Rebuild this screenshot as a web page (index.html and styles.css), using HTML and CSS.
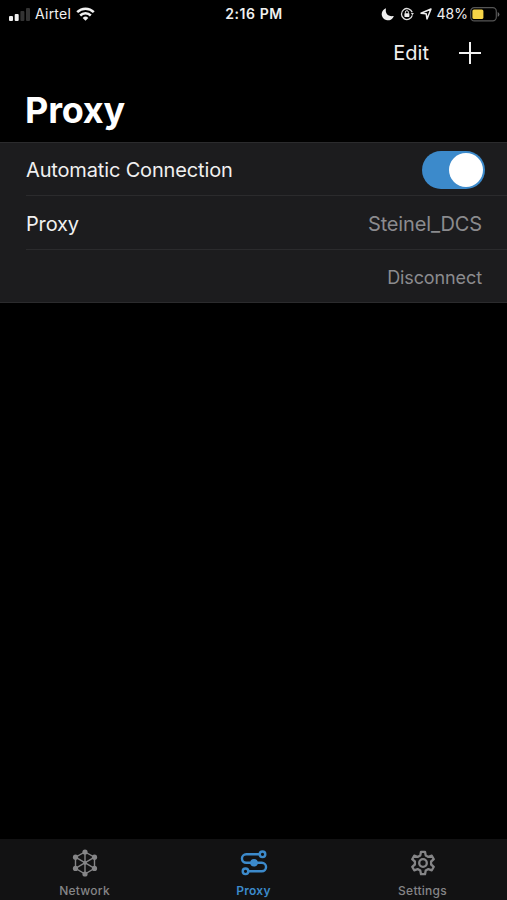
FILE: index.html
```
<!DOCTYPE html>
<html lang="en">
<head>
<meta charset="utf-8">
<title>Proxy</title>
<link rel="stylesheet" href="styles.css">
</head>
<body>
<div class="screen">
  <header class="status">
    <div class="status-left">
      <svg class="signal" width="21" height="13" viewBox="0 0 21 13"><rect y="8" width="4" height="5" rx="1" fill="#eee"/><rect x="5.7" y="6" width="4" height="7" rx="1" fill="#eee"/><rect x="11.4" y="3" width="4" height="10" rx="1" fill="#333"/><rect x="17" width="4" height="13" rx="1" fill="#333"/></svg>
      <span class="carrier">Airtel</span>
      <svg class="wifi" width="19" height="14" viewBox="0 0 19 14" fill="none" stroke="#f2f2f2" stroke-width="2.5"><path d="M1.2 5.2a11.7 11.7 0 0 1 16.6 0M4.2 8.5a7.5 7.5 0 0 1 10.6 0"/><path d="M6.7 10.9a4 4 0 0 1 5.6 0L9.5 13.8z" fill="#f2f2f2" stroke="none"/></svg>
    </div>
    <time class="clock">2:16 PM</time>
    <div class="status-right">
      <svg width="12" height="12" viewBox="0 0 12 12" fill="#eee"><path d="M4 .2C2.8 5.4 6.2 9 11.8 8A6.2 6.2 0 1 1 4 .2z"/></svg>
      <svg class="lock" width="14" height="14" viewBox="0 0 14 14"><path d="M12.3 8.4A5.5 5.5 0 1 1 12.2 5.3" fill="none" stroke="#ddd" stroke-width="1.3"/><path d="M10.8 6.1h3.1l-1.5 2.2z" fill="#ddd"/><rect x="4.4" y="6.2" width="5" height="3.7" rx=".6" fill="#eee"/><path d="M5.4 6.6V5.2a1.5 1.5 0 0 1 3 0v1.4" fill="none" stroke="#eee"/></svg>
      <svg class="arrow" width="12" height="12" viewBox="0 0 12 12"><path d="M1 5.2L11 1 7 11 6.2 5.8z" fill="none" stroke="#eee" stroke-width="1.5" stroke-linejoin="round"/></svg>
      <span class="percent">48%</span>
      <svg class="battery" width="30" height="15" viewBox="0 0 30 15"><rect x=".7" y=".7" width="25.6" height="13.2" rx="3.6" fill="none" stroke="#555" stroke-width="1.2"/><rect x="2.4" y="2.5" width="11" height="9.6" rx="1.6" fill="#f7d447"/><path d="M27.7 5q1.7.8 1.7 2.4t-1.7 2.4z" fill="#666"/></svg>
    </div>
  </header>
  <nav class="toolbar">
    <span class="edit">Edit</span>
    <svg width="22" height="22" viewBox="0 0 22 22" stroke="#f2f2f2" stroke-width="2"><path d="M0 11h22M11 0v22"/></svg>
  </nav>
  <h1 class="title">Proxy</h1>
  <main class="list">
    <div class="row">
      <span class="label">Automatic Connection</span>
      <span class="switch"><span class="knob"></span></span>
    </div>
    <div class="row">
      <span class="label">Proxy</span>
      <span class="value">Steinel_DCS</span>
    </div>
    <div class="row">
      <span class="action">Disconnect</span>
    </div>
  </main>
  <footer class="tabs">
    <div class="tab">
      <svg width="26" height="28" viewBox="0 0 26 28" stroke="#858587" fill="#858587"><path d="M13 3L22.5 8.2V19.4L13 25 3.5 19.4V8.2zM13 3V25M3.5 8.2L22.5 19.4M22.5 8.2L3.5 19.4" fill="none" stroke-width="1.4"/><g stroke="none"><circle cx="13" cy="3" r="2.6"/><circle cx="22.5" cy="8.2" r="2.6"/><circle cx="22.5" cy="19.4" r="2.6"/><circle cx="13" cy="25" r="2.6"/><circle cx="3.5" cy="19.4" r="2.6"/><circle cx="3.5" cy="8.2" r="2.6"/><circle cx="13" cy="13.8" r="1.9"/></g></svg>
      <span class="tab-name">Network</span>
    </div>
    <div class="tab active">
      <svg width="26" height="28" viewBox="0 0 26 28" fill="none" stroke="#3c8acb" stroke-width="2.4"><path d="M18.5 5.3H5.2a4.25 4.25 0 0 0 0 8.5H20.8a4.25 4.25 0 0 1 0 8.5H7.5"/><circle cx="21.5" cy="5.3" r="2.8"/><circle cx="4.5" cy="22.3" r="2.8"/><circle cx="13" cy="13.8" r="3.8" fill="#3c8acb" stroke="none"/></svg>
      <span class="tab-name">Proxy</span>
    </div>
    <div class="tab">
      <svg width="26" height="28" viewBox="0 0 26 28" fill="none" stroke="#858587" stroke-width="2.3" stroke-linejoin="round"><path d="M11 2.8h4l.7 3.6 2.7 1.5 3.4-1.2 2 3.5-2.7 2.3v3l2.7 2.3-2 3.5-3.4-1.2-2.7 1.5-.7 3.6h-4l-.7-3.6-2.7-1.5-3.4 1.2-2-3.5 2.7-2.3v-3l-2.7-2.3 2-3.5 3.4 1.2 2.7-1.5z"/><circle cx="13" cy="14" r="3.8"/></svg>
      <span class="tab-name">Settings</span>
    </div>
  </footer>
</div>
</body>
</html>
```
FILE: styles.css
```
* { box-sizing: border-box; }
body { margin: 0; background: #000; color: #f0f0f0; font-family: Inter, "Liberation Sans", sans-serif; }
svg { display: block; flex: none; overflow: visible; }
.screen { height: 900px; display: flex; flex-direction: column; overflow: hidden; }
.status { height: 28px; padding: 0 7px 0 9px; display: grid; grid-template-columns: 1fr auto 1fr; align-items: center; font-size: 14px; line-height: 28px; }
.status-left, .status-right { display: flex; align-items: center; height: 27px; }
.status-right { justify-content: flex-end; }
.carrier { margin-left: 5px; letter-spacing: .25px; }
.wifi { margin-left: 5px; }
.clock { font-size: 14px; font-weight: 600; letter-spacing: .55px; margin-right: 1px; }
.lock { margin-left: 6px; }
.arrow { margin-left: 6px; }
.percent { margin-left: 5px; }
.battery { margin-left: 2px; }
.toolbar { height: 49px; padding-right: 26px; display: flex; align-items: center; justify-content: flex-end; gap: 30px; }
.edit { font-size: 20px; }
.title { height: 65px; margin: 0; padding-left: 25px; font-size: 36px; font-weight: 700; line-height: 66px; letter-spacing: -.2px; color: #fff; }
.list { height: 161px; background: #1c1c1e; border-top: 1px solid #2b2b2d; border-bottom: 1px solid #2b2b2d; }
.row { height: 52px; margin-left: 26px; padding: 2px 25px 0 0; display: flex; align-items: center; justify-content: space-between; font-size: 20px; letter-spacing: -.15px; }
.row + .row { height: 54px; border-top: 1px solid #2b2b2d; }
.row:last-child { justify-content: flex-end; }
.row:first-child { padding-right: 22px; }
.value, .action { color: #8b8b8e; }
.action { font-size: 18px; letter-spacing: -.1px; }
.switch { width: 63px; height: 38px; margin-bottom: 1px; padding: 2px; border-radius: 19px; background: #3c8acb; display: flex; justify-content: flex-end; }
.knob { width: 34px; height: 34px; border-radius: 50%; background: #fff; }
.tabs { height: 61px; margin-top: auto; padding-top: 10px; background: #121213; display: grid; grid-template-columns: repeat(3, 1fr); }
.tab { display: flex; flex-direction: column; align-items: center; color: #858587; }
.tab-name { margin-top: 6px; font-size: 12px; font-weight: 500; line-height: 15px; letter-spacing: .25px; }
.active { color: #3c8acb; }
.active .tab-name { font-weight: 600; }
```
